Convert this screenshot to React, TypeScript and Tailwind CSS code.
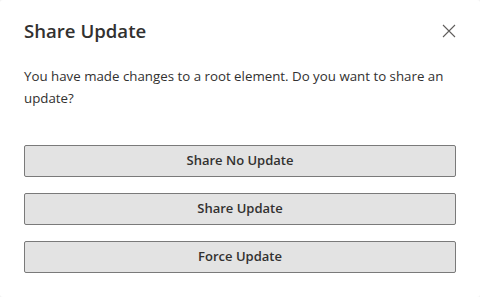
const actions = ['Share No Update', 'Share Update', 'Force Update']

export default function App() {
  return (
    <div className="w-[480px] h-[297px] bg-[#f3f3f3]" style={{ fontFamily: '"Open Sans", sans-serif' }}>
      <div className="w-full h-full bg-white rounded-[3px] flex flex-col">
        <div className="flex items-start justify-between pl-6 pr-6 pt-[18px]">
          <h1 className="text-[18.6px] leading-[26px] font-semibold text-[#323130]">Share Update</h1>
          <button className="mt-[6px] text-[#605e5c]" aria-label="Close">
            <svg width="14" height="14" viewBox="0 0 14 14" fill="none" stroke="currentColor" strokeWidth="1.1">
              <path d="M1 1L13 13M13 1L1 13" />
            </svg>
          </button>
        </div>
        <p className="px-6 mt-[21px] text-[13.3px] leading-[22px] text-[#323130]">
          You have made changes to a root element. Do you want to share an update?
        </p>
        <div className="mt-[36px] px-6 flex flex-col gap-4">
          {actions.map((label) => (
            <button
              key={label}
              className="h-8 w-[432px] rounded-[2px] border border-[#7a7a7a] bg-[#e3e3e3] text-[13px] font-semibold text-[#323130]"
            >
              {label}
            </button>
          ))}
        </div>
      </div>
    </div>
  )
}
